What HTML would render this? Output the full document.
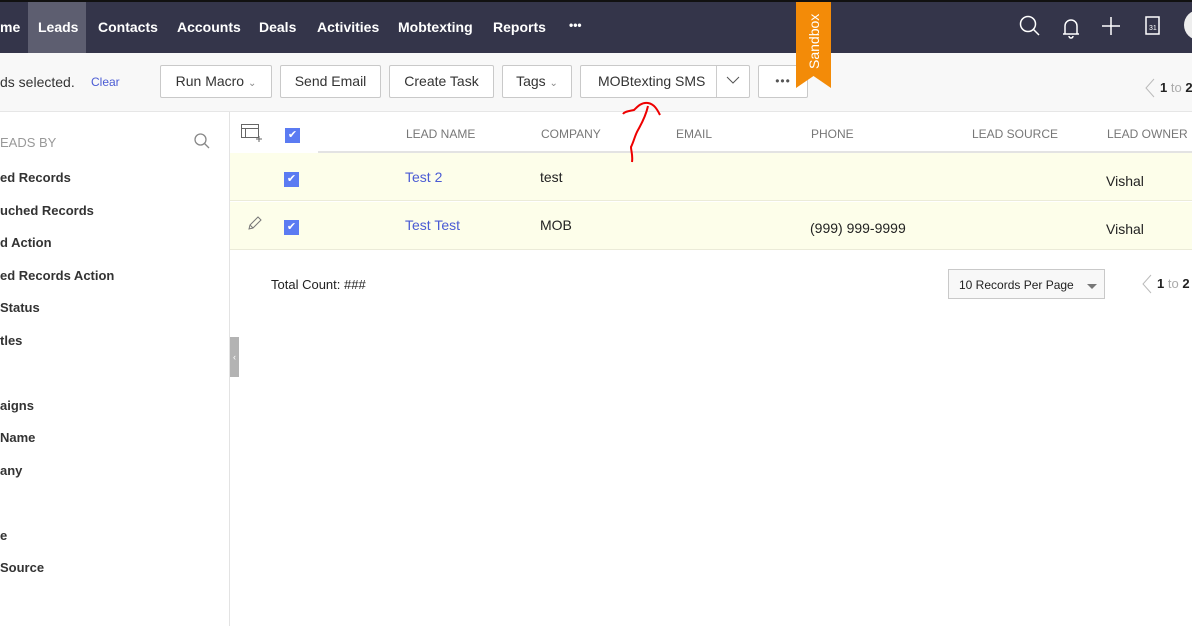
<!DOCTYPE html>
<html><head><style>
*{margin:0;padding:0;box-sizing:border-box}
body{width:1192px;height:626px;overflow:hidden;font-family:"Liberation Sans",sans-serif;background:#fff;position:relative;color:#222}
div{white-space:nowrap}
.abs{position:absolute}
#nav{left:0;top:0;width:1192px;height:53px;background:#34354a;border-top:2px solid #111}
.ni{position:absolute;top:19px;color:#fff;font-weight:bold;font-size:14px}
#tb{left:0;top:53px;width:1192px;height:59px;background:#f8f8f8;border-bottom:1px solid #e6e6e6}
.btn{position:absolute;top:65px;height:33px;border:1px solid #c9c9c9;background:#fff;border-radius:2px;font-size:14px;color:#333;line-height:31px;text-align:center}
.side{position:absolute;left:0;font-size:13px;font-weight:bold;color:#333}
.hd{position:absolute;top:127px;font-size:12px;color:#777}
.cb{position:absolute;width:15px;height:15px;background:#5b7bf2;color:#fff;font-size:11px;line-height:15px;text-align:center}
.row{position:absolute;left:230px;width:962px;height:48px;background:#fdfeea;border-bottom:1px solid #ebebd8}
.c{position:absolute;font-size:14px;color:#222}
.lk{color:#4a5bd4}
</style></head><body>
<div id="nav" class="abs"></div>
<div class="abs" style="left:28px;top:2px;width:58px;height:51px;background:#5d5e70"></div>
<div class="ni" style="left:0">me</div>
<div class="ni" style="left:38px">Leads</div>
<div class="ni" style="left:98px">Contacts</div>
<div class="ni" style="left:177px">Accounts</div>
<div class="ni" style="left:259px">Deals</div>
<div class="ni" style="left:317px">Activities</div>
<div class="ni" style="left:398px">Mobtexting</div>
<div class="ni" style="left:493px">Reports</div>
<div class="ni" style="left:569px;top:18px;font-size:12px">•••</div>
<svg class="abs" style="left:1018px;top:14px" width="160" height="26" fill="none" stroke="#fff" stroke-width="1.5">
<circle cx="10" cy="10" r="7.5"/><line x1="15.5" y1="15.5" x2="21" y2="21"/>
<path d="M45 20 h16 M47 20 v-8 a6 6 0 0 1 12 0 v8 M51 22 a2 2 0 0 0 4 0"/>
<path d="M93 3 v18 M84 12 h18"/>
<rect x="128" y="3" width="13" height="17"/><text x="131" y="16" font-size="7" fill="#fff" stroke="none" font-family="Liberation Sans">31</text>
</svg>
<div class="abs" style="left:1184px;top:10px;width:30px;height:30px;border-radius:50%;background:#eee"></div>
<div id="tb" class="abs"></div>
<div class="abs" style="left:0;top:74px;font-size:14px;color:#333">ds selected.</div>
<div class="abs" style="left:91px;top:75px;font-size:12px;color:#4a5bd4">Clear</div>
<div class="btn" style="left:160px;width:112px">Run Macro <span style="font-size:10px;color:#888">&#8964;</span></div>
<div class="btn" style="left:280px;width:101px">Send Email</div>
<div class="btn" style="left:389px;width:105px">Create Task</div>
<div class="btn" style="left:502px;width:70px">Tags <span style="font-size:10px;color:#888">&#8964;</span></div>
<div class="btn" style="left:580px;width:170px;text-align:left;padding-left:17px">MOBtexting SMS</div>
<div class="abs" style="left:716px;top:66px;width:1px;height:31px;background:#ccc"></div>
<svg class="abs" style="left:726px;top:76px" width="14" height="9" fill="none" stroke="#555"><path d="M1 1 L7 7 L13 1"/></svg>
<div class="btn" style="left:758px;width:50px;font-size:12px;letter-spacing:1px;color:#555">•••</div>
<svg class="abs" style="left:796px;top:2px" width="36" height="86"><path d="M0 0 H35 V86 L17.5 74 L0 86 Z" fill="#f38b08"/><text transform="translate(23,67) rotate(-90)" font-size="14" fill="#fff" font-family="Liberation Sans">Sandbox</text></svg>
<svg class="abs" style="left:1144px;top:78px" width="12" height="20" fill="none" stroke="#bbb"><path d="M10 1 L2 10 L10 19"/></svg>
<div class="abs" style="left:1160px;top:80px;font-size:13px"><b>1</b> <span style="color:#aaa">to</span> <b>2</b></div>
<!-- sidebar -->
<div class="abs" style="left:229px;top:112px;width:1px;height:514px;background:#e3e3e3"></div>
<div class="abs" style="left:0;top:135px;font-size:13px;color:#999">EADS BY</div>
<svg class="abs" style="left:194px;top:133px" width="16" height="16" fill="none" stroke="#888" stroke-width="1.3"><circle cx="6.5" cy="6.5" r="5.5"/><path d="M10.5 10.5 L15 15"/></svg>
<div class="side" style="top:170px">ed Records</div>
<div class="side" style="top:203px">uched Records</div>
<div class="side" style="top:235px">d Action</div>
<div class="side" style="top:268px">ed Records Action</div>
<div class="side" style="top:300px">Status</div>
<div class="side" style="top:333px">tles</div>
<div class="side" style="top:398px">aigns</div>
<div class="side" style="top:430px">Name</div>
<div class="side" style="top:463px">any</div>
<div class="side" style="top:528px">e</div>
<div class="side" style="top:560px">Source</div>
<div class="abs" style="left:230px;top:337px;width:9px;height:40px;background:#b3b3b3;color:#fff;font-size:9px;line-height:40px;text-align:center">&lsaquo;</div>
<!-- table -->
<div class="abs" style="left:318px;top:151px;width:874px;height:2px;background:#e3e3e3"></div>
<svg class="abs" style="left:241px;top:124px" width="22" height="18" fill="none" stroke="#666"><rect x="0.5" y="0.5" width="17" height="13"/><path d="M0.5 4.5 H17.5 M4.5 4.5 V13.5 M18 12 v6 M15 15 h6"/></svg>
<div class="cb" style="left:285px;top:128px">✔</div>
<div class="hd" style="left:406px">LEAD NAME</div>
<div class="hd" style="left:541px">COMPANY</div>
<div class="hd" style="left:676px">EMAIL</div>
<div class="hd" style="left:811px">PHONE</div>
<div class="hd" style="left:972px">LEAD SOURCE</div>
<div class="hd" style="left:1107px">LEAD OWNER</div>
<div class="row" style="top:153px"></div>
<div class="row" style="top:202px"></div>
<div class="cb" style="left:284px;top:172px">✔</div>
<div class="cb" style="left:284px;top:220px">✔</div>
<svg class="abs" style="left:248px;top:216px" width="14" height="14" fill="none" stroke="#777"><path d="M1 13 L2 9 L10 1 L13 4 L5 12 Z M2 9 L5 12"/></svg>
<div class="c lk" style="left:405px;top:169px">Test 2</div>
<div class="c" style="left:540px;top:169px">test</div>
<div class="c" style="left:1106px;top:173px">Vishal</div>
<div class="c lk" style="left:405px;top:217px">Test Test</div>
<div class="c" style="left:540px;top:217px">MOB</div>
<div class="c" style="left:810px;top:220px">(999) 999-9999</div>
<div class="c" style="left:1106px;top:221px">Vishal</div>
<div class="c" style="left:271px;top:277px;font-size:13px">Total Count: ###</div>
<div class="abs" style="left:948px;top:269px;width:157px;height:30px;border:1px solid #c9c9c9;background:#f8f8f8;font-size:12px;line-height:30px;padding-left:10px">10 Records Per Page</div>
<div class="abs" style="left:1087px;top:284px;border-left:5px solid transparent;border-right:5px solid transparent;border-top:5px solid #777"></div>
<svg class="abs" style="left:1141px;top:274px" width="12" height="20" fill="none" stroke="#bbb"><path d="M10 1 L2 10 L10 19"/></svg>
<div class="abs" style="left:1157px;top:276px;font-size:13px"><b>1</b> <span style="color:#aaa">to</span> <b>2</b></div>
<!-- red annotation -->
<svg class="abs" style="left:610px;top:95px" width="70" height="75" fill="none" stroke="#e00" stroke-width="2"><path d="M13 19 C15 16 20 16 24 15 C28 11 32 7 38 8 C44 9 47 14 50 20 M38 11 C36 20 32 28 28 35 C25 40 24 46 21 52 C21 56 23 60 22 67"/></svg>
</body></html>
